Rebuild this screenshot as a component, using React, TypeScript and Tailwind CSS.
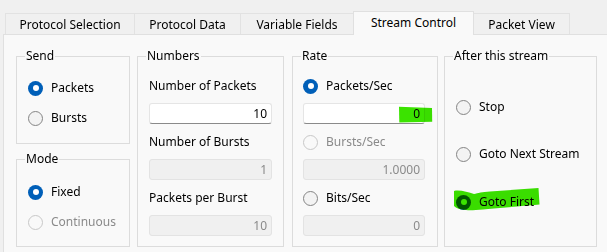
import React from "react";

function Radio({ checked, disabled, label }: { checked?: boolean; disabled?: boolean; label: string }) {
  return (
    <div className="flex items-center h-[16px] gap-[8px]">
      {checked ? (
        <div className="w-[15px] h-[15px] rounded-full bg-[#005fb8] flex items-center justify-center shrink-0">
          <div className="w-[6px] h-[6px] rounded-full bg-white" />
        </div>
      ) : (
        <div
          className={
            disabled
              ? "w-[15px] h-[15px] rounded-full border border-[#c8c8c8] bg-[#f9f9f9] shrink-0"
              : "w-[15px] h-[15px] rounded-full border border-[#858585] bg-[#f3f3f3] shrink-0"
          }
        />
      )}
      <span className={disabled ? "text-[#8a8a8a] leading-[16px]" : "text-black leading-[16px]"}>{label}</span>
    </div>
  );
}

function Input({ value, disabled, w }: { value: string; disabled?: boolean; w: string }) {
  return (
    <div
      className={
        disabled
          ? `${w} h-[21px] rounded-[3px] border border-[#e3e3e3] bg-[#f0f0f0] text-[#8a8a8a] flex items-center justify-end pr-[4px] leading-[16px]`
          : `${w} h-[21px] rounded-[3px] border border-[#e5e5e5] border-b-[#8a8a8a] bg-white text-black flex items-center justify-end pr-[4px] leading-[16px]`
      }
    >
      {value}
    </div>
  );
}

function Legend({ children }: { children: React.ReactNode }) {
  return <legend className="ml-[8px] px-[1px] leading-[16px] text-black">{children}</legend>;
}

function Tab({ label, w, selected, first }: { label: string; w: string; selected?: boolean; first?: boolean }) {
  if (selected) {
    return (
      <div
        className={`${w} h-[24px] -mb-px -ml-px relative z-10 border border-b-0 border-[#e0e0e0] bg-[#f9f9f9] flex items-center justify-center pb-[1px] text-black`}
      >
        {label}
      </div>
    );
  }
  return (
    <div
      className={`${w} h-[21px] ${first ? "" : "-ml-px"} border border-b-0 border-[#e2e2e2] bg-[#f0f0f0] flex items-center justify-center pt-[1px] text-black`}
    >
      {label}
    </div>
  );
}

export default function App() {
  return (
    <div className="relative w-[607px] h-[252px] bg-[#f0f0f0] overflow-hidden font-['Noto_Sans',sans-serif] text-[12px] text-black">
      <div className="flex items-end h-[34px] pl-[5px]">
        <Tab label="Protocol Selection" w="w-[130px]" first />
        <Tab label="Protocol Data" w="w-[107px]" />
        <Tab label="Variable Fields" w="w-[114px]" />
        <Tab label="Stream Control" w="w-[121px]" selected />
        <Tab label="Packet View" w="w-[97px]" />
      </div>
      <div className="ml-[3px] h-[218px] border-l border-t border-[#e0e0e0] bg-[#f9f9f9] pl-[12px] pt-[13px] flex">
        {/* Column 1 */}
        <div className="w-[114px] flex flex-col gap-[7px]">
          <fieldset className="h-[96px] border border-[#dcdcdc] p-0">
            <Legend>Send</Legend>
            <div className="pl-[11px] pt-[16px] flex flex-col gap-[14px]">
              <Radio checked label="Packets" />
              <Radio label="Bursts" />
            </div>
          </fieldset>
          <fieldset className="h-[96px] border border-[#dcdcdc] p-0">
            <Legend>Mode</Legend>
            <div className="pl-[11px] pt-[17px] flex flex-col gap-[14px]">
              <Radio checked label="Fixed" />
              <Radio disabled label="Continuous" />
            </div>
          </fieldset>
        </div>
        {/* Numbers */}
        <fieldset className="ml-[7px] w-[147px] h-[199px] border border-[#dcdcdc] p-0">
          <Legend>Numbers</Legend>
          <div className="px-[11px]">
            <div className="pt-[14px] leading-[16px]">Number of Packets</div>
            <div className="mt-[9px]">
              <Input value="10" w="w-[123px]" />
            </div>
            <div className="mt-[10px] leading-[16px]">Number of Bursts</div>
            <div className="mt-[9px]">
              <Input value="1" disabled w="w-[123px]" />
            </div>
            <div className="mt-[10px] leading-[16px]">Packets per Burst</div>
            <div className="mt-[9px]">
              <Input value="10" disabled w="w-[123px]" />
            </div>
          </div>
        </fieldset>
        {/* Rate */}
        <fieldset className="ml-[8px] w-[146px] h-[199px] border border-[#dcdcdc] p-0">
          <Legend>Rate</Legend>
          <div className="pl-[10px]">
            <div className="pt-[14px]">
              <Radio checked label="Packets/Sec" />
            </div>
            <div className="mt-[9px]">
              <Input value="0" w="w-[122px]" />
            </div>
            <div className="mt-[10px]">
              <Radio disabled label="Bursts/Sec" />
            </div>
            <div className="mt-[9px]">
              <Input value="1.0000" disabled w="w-[122px]" />
            </div>
            <div className="mt-[10px]">
              <Radio label="Bits/Sec" />
            </div>
            <div className="mt-[9px]">
              <Input value="0" disabled w="w-[122px]" />
            </div>
          </div>
        </fieldset>
        {/* After */}
        <fieldset className="ml-[6px] w-[153px] h-[199px] border border-[#dcdcdc] p-0">
          <Legend>After this stream</Legend>
          <div className="pl-[11px]">
            <div className="pt-[35px]">
              <Radio label="Stop" />
            </div>
            <div className="mt-[31px]">
              <Radio label="Goto Next Stream" />
            </div>
            <div className="mt-[32px]">
              <Radio checked label="Goto First" />
            </div>
          </div>
        </fieldset>
      </div>
      {/* Highlighter marks */}
      <svg
        className="absolute left-0 top-0 pointer-events-none mix-blend-multiply"
        width="607"
        height="252"
        viewBox="0 0 607 252"
      >
        <path d="M399,106.8 L432,108 L432.2,121.8 L399.3,122.5 Z" fill="#3be300" />
        <path
          d="M454,191 C460,189.5 468,192.5 474,194 C478,193 482,192 490,191.5 C505,190.5 522,189 538.5,188 L539.5,204.5 C528,205.5 516,206.5 506,207.5 C497,208 490,209 483,209.5 C476,210 470,210.5 466,210 C460,209.5 456,208.5 454,206 Z"
          fill="#3be300"
        />
      </svg>
    </div>
  );
}
